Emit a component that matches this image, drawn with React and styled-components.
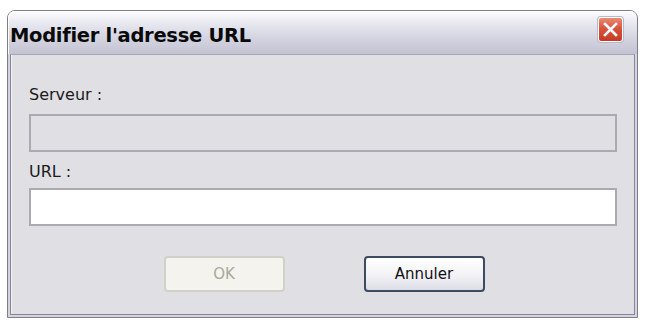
import styled, { createGlobalStyle } from 'styled-components';

const Global = createGlobalStyle`
  html, body {
    margin: 0;
    padding: 0;
    background: #ffffff;
  }
`;

const Page = styled.div`
  width: 645px;
  height: 323px;
  box-sizing: border-box;
  padding: 10px 7px 5px 7px;
`;

const Window = styled.div`
  height: 100%;
  box-sizing: border-box;
  display: flex;
  flex-direction: column;
  border: 1px solid #7d7d8f;
  border-radius: 8px 8px 0 0;
  background: #d4d4de;
  padding: 0 2px 2px 2px;
`;

const TitleBar = styled.div`
  height: 43px;
  flex: none;
  display: flex;
  align-items: flex-start;
  justify-content: space-between;
  padding: 0 14px 0 2px;
  margin: 0 -2px;
  border-radius: 7px 7px 0 0;
  background: linear-gradient(#fdfdff 0%, #eaeaf2 25%, #d6d6e2 60%, #c2c2d2 100%);
  box-shadow: inset 1px 1px 0 #ffffff;
`;

const Title = styled.span`
  font-family: "DejaVu Sans", sans-serif;
  font-weight: bold;
  font-size: 19.5px;
  line-height: 24px;
  color: #0a0a0a;
  letter-spacing: -0.3px;
  margin-top: 13px;
`;

const CloseButton = styled.button`
  width: 25px;
  height: 25px;
  padding: 0;
  margin-top: 6px;
  display: flex;
  align-items: center;
  justify-content: center;
  border: 1px solid #ffffff;
  border-radius: 3px;
  background: linear-gradient(#ea8a74 0%, #d9533d 45%, #c53a26 100%);
  box-shadow: 0 0 0 1px #b8b8c6;
`;

const Body = styled.div`
  flex: 1;
  display: flex;
  flex-direction: column;
  padding: 30px 17px 0 18px;
  background: #e0dfe3;
  border: 1px solid #858596;
  border-top-color: #a6a6b6;
  box-shadow: inset 1px 0 0 #f2f2f6;
`;

const Label = styled.div`
  font-family: "DejaVu Sans", sans-serif;
  font-size: 16px;
  line-height: 19px;
  color: #1a1a1a;
  margin-bottom: ${(p) => p.$gap}px;
`;

const Field = styled.div`
  height: 38px;
  box-sizing: border-box;
  border: 2px solid #aaaab0;
  background: ${(p) => (p.$disabled ? '#e0dfe3' : '#ffffff')};
  margin-bottom: ${(p) => p.$after}px;
`;

const Buttons = styled.div`
  display: flex;
  justify-content: center;
  gap: 79px;
  margin-top: 30px;
  padding-left: 2px;
`;

const Button = styled.button`
  width: 121px;
  height: 36px;
  box-sizing: border-box;
  border-radius: 4px;
  font-family: "DejaVu Sans", sans-serif;
  font-size: 15px;
  padding: 0;
  border: 2px solid ${(p) => (p.disabled ? '#d2d1c8' : '#3c4a62')};
  color: ${(p) => (p.disabled ? '#a9a89c' : '#111111')};
  background: ${(p) =>
    p.disabled
      ? '#f4f3ee'
      : 'linear-gradient(#ffffff 0%, #f4f4f8 50%, #dcdce6 100%)'};
`;

export default function App() {
  return (
    <Page>
      <Global />
      <Window>
        <TitleBar>
          <Title>Modifier l'adresse URL</Title>
          <CloseButton aria-label="Fermer">
            <svg width="15" height="15" viewBox="0 0 15 15">
              <path
                d="M2 2 L13 13 M13 2 L2 13"
                stroke="#ffffff"
                strokeWidth="2.6"
                strokeLinecap="square"
              />
            </svg>
          </CloseButton>
        </TitleBar>
        <Body>
          <Label $gap={10}>Serveur :</Label>
          <Field $disabled $after={10} />
          <Label $gap={7}>URL :</Label>
          <Field />
          <Buttons>
            <Button disabled>OK</Button>
            <Button>Annuler</Button>
          </Buttons>
        </Body>
      </Window>
    </Page>
  );
}
